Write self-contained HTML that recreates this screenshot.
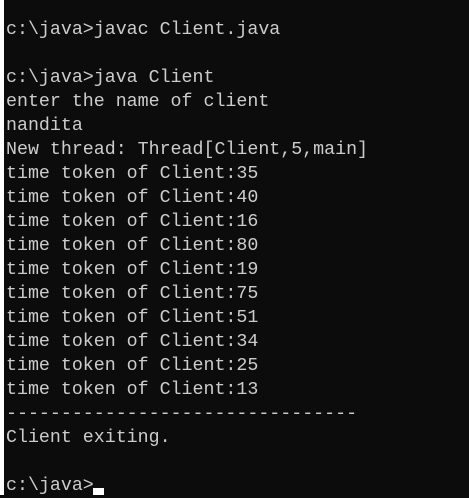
<!DOCTYPE html>
<html><head><style>
html,body{margin:0;padding:0;}
body{width:469px;height:495px;background:#0c0c0c;position:relative;overflow:hidden;}
.strip{position:absolute;left:0;top:0;width:4px;height:495px;background:#fff;}
pre{position:absolute;left:6px;top:18px;margin:0;font-family:"Liberation Mono",monospace;font-size:18.3px;line-height:24px;color:#cccccc;}
.cur{position:absolute;left:93px;top:488px;width:11px;height:7px;background:#fff;}
</style></head><body>
<div class="strip"></div>
<pre>c:\java&gt;javac Client.java

c:\java&gt;java Client
enter the name of client
nandita
New thread: Thread[Client,5,main]
time token of Client:35
time token of Client:40
time token of Client:16
time token of Client:80
time token of Client:19
time token of Client:75
time token of Client:51
time token of Client:34
time token of Client:25
time token of Client:13
--------------------------------
Client exiting.

c:\java&gt;</pre>
<div class="cur"></div>
</body></html>
